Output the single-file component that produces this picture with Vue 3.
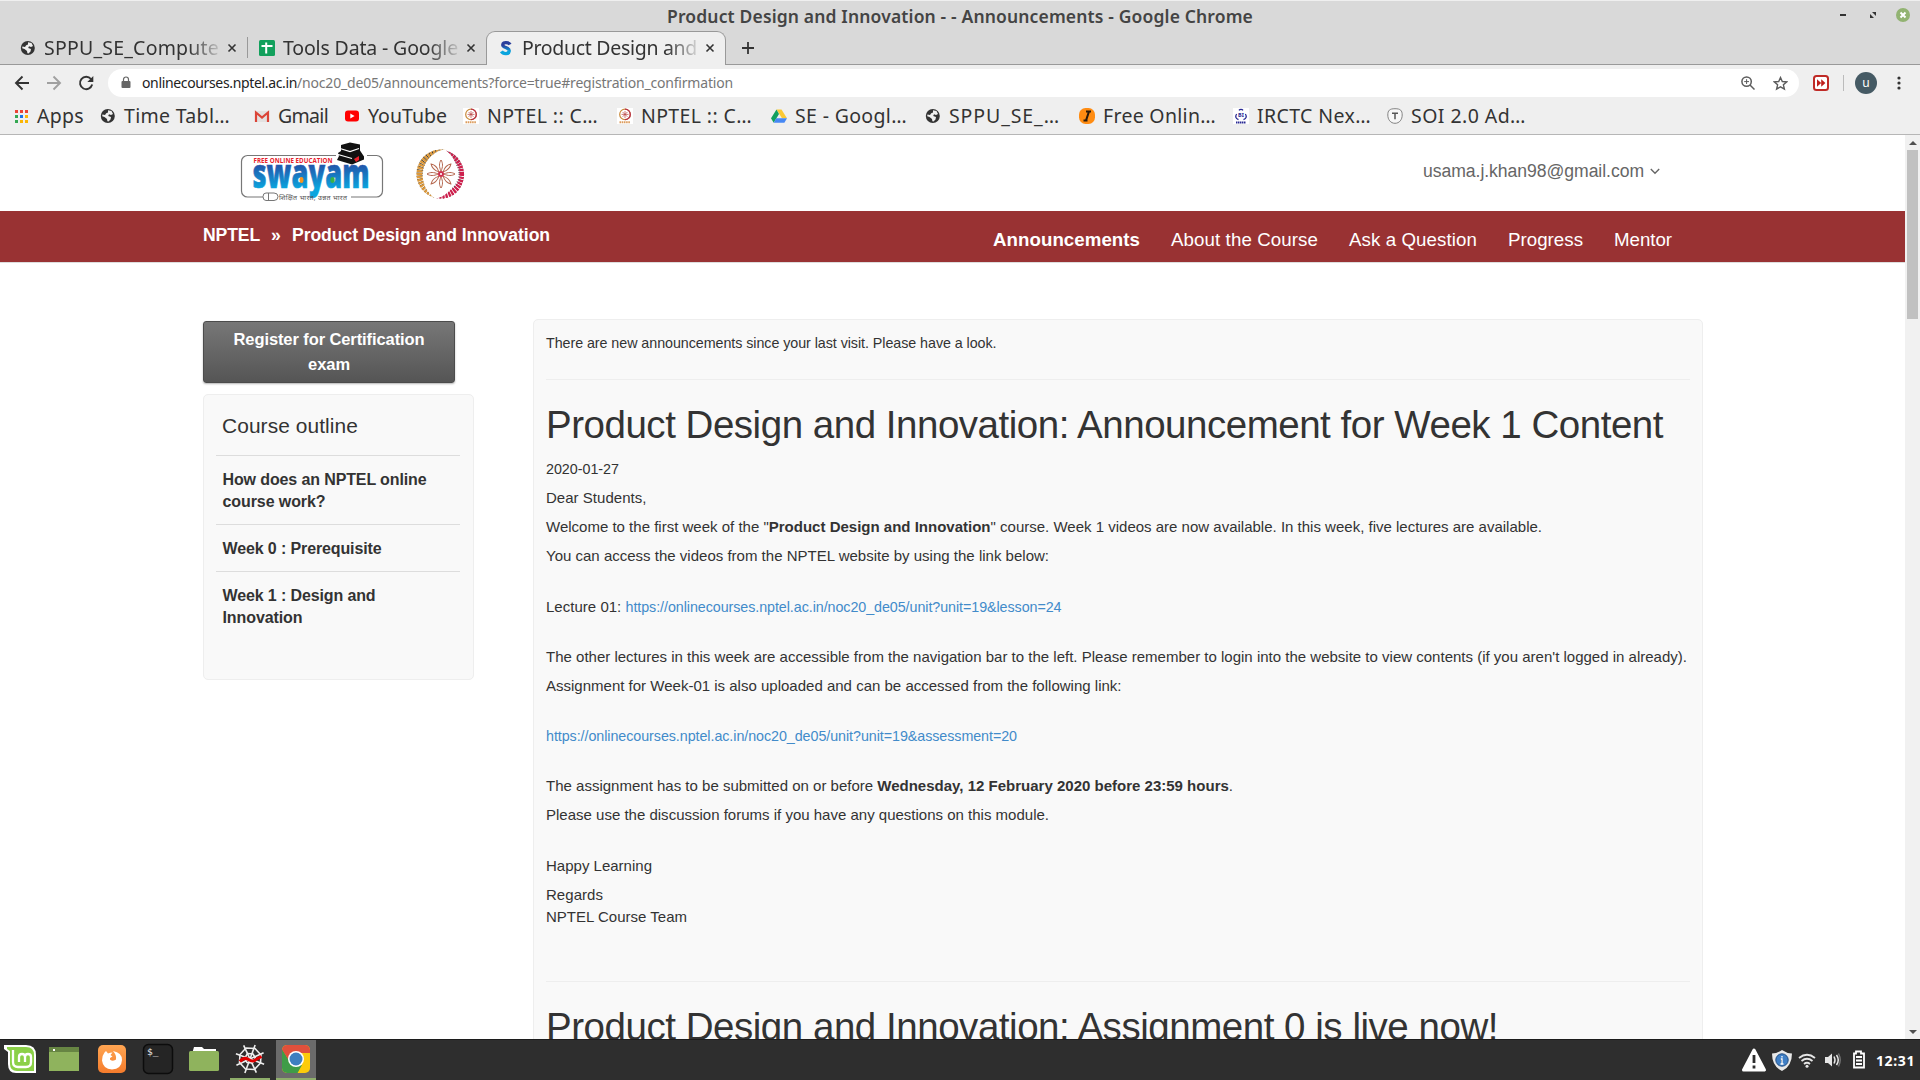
<script setup>
// Spreads a line's letters so that it takes the given width in pixels.
const vFit = {
  mounted(el, { value }) {
    const natural = el.getBoundingClientRect().width
    const count = el.textContent.length
    el.style.letterSpacing = `${(value - natural) / count}px`
  },
}

const tabs = [
  { icon: 'globe', text: 'SPPU_SE_Compute', w: 175 },
  { icon: 'sheet', text: 'Tools Data - Google', w: 175 },
  { icon: 'swayam', text: 'Product Design and', w: 175, active: true },
]

const bookmarks = [
  { icon: 'apps', text: 'Apps', w: 47 },
  { icon: 'globe', text: 'Time Tabl…', w: 106 },
  { icon: 'gmail', text: 'Gmail', w: 50 },
  { icon: 'youtube', text: 'YouTube', w: 79 },
  { icon: 'nptel', text: 'NPTEL :: C…', w: 111 },
  { icon: 'nptel', text: 'NPTEL :: C…', w: 111 },
  { icon: 'drive', text: 'SE - Googl…', w: 112 },
  { icon: 'globe', text: 'SPPU_SE_…', w: 111 },
  { icon: 'intern', text: 'Free Onlin…', w: 113 },
  { icon: 'irctc', text: 'IRCTC Nex…', w: 114 },
  { icon: 'soi', text: 'SOI 2.0 Ad…', w: 115 },
]

const nav = [
  { text: 'Announcements', w: 147, active: true },
  { text: 'About the Course', w: 147 },
  { text: 'Ask a Question', w: 128 },
  { text: 'Progress', w: 75 },
  { text: 'Mentor', w: 58 },
]

const outline = [
  [['How does an NPTEL online', 204], ['course work?', 103]],
  [['Week 0 : Prerequisite', 159]],
  [['Week 1 : Design and', 153], ['Innovation', 80]],
]

const rays = [0, 45, 90, 135, 180, 225, 270, 315]
const spokes = [0, 45, 90, 135]
</script>

<template>
  <div class="screen">
    <svg class="defs" width="0" height="0">
      <defs>
        <linearGradient id="blue" x1="0" y1="0" x2="0" y2="1">
          <stop offset="0.25" stop-color="#2a3f9b" /><stop offset="0.8" stop-color="#0aa5de" />
        </linearGradient>
        <linearGradient id="ffx" x1="0" y1="0" x2="0" y2="1">
          <stop offset="0" stop-color="#ffa552" /><stop offset="1" stop-color="#f57c2c" />
        </linearGradient>
        <symbol id="i-globe" viewBox="0 0 16 16">
          <circle cx="7.8" cy="8" r="7" fill="#333" />
          <path d="M8 2.2 11.5 3 13 6 11 7 9 6.2 8.2 8 11 9 10.5 11.5 8.5 13.5 7.4 13.3 7 11 4.5 9 2.2 8.2 2.4 6.4 5 7 6.2 5.2 8 4.4Z" fill="#efefef" />
        </symbol>
        <symbol id="i-sheet" viewBox="0 0 16 16">
          <rect width="16" height="16" rx="1.5" fill="#12a05c" /><path d="M2.500 6h11M7.200 2.500V13.500" stroke="#fff" stroke-width="2" />
        </symbol>
        <symbol id="i-swayam" viewBox="0 0 16 16">
          <path d="M12 4.6C11 2.6 5 1.4 4.8 4.8 4.6 8 11.5 7 11.2 11 10.8 14.8 5 14 3.4 11.4" fill="none" stroke="url(#blue)" stroke-width="3.4" />
        </symbol>
        <symbol id="i-apps" viewBox="0 0 16 16">
          <path d="M2 2h3v3H2zM7 2h3v3H7zM12 2h3v3h-3z" fill="#ea4335" />
          <path d="M2 7h3v3H2zM2 12h3v3H2z" fill="#34a853" /><path d="M7 7h3v3H7z" fill="#1a73e8" />
          <path d="M12 7h3v3h-3zM7 12h3v3H7zM12 12h3v3h-3z" fill="#fbb605" />
        </symbol>
        <symbol id="i-gmail" viewBox="0 0 16 16">
          <path d="M1 3h14v11H1z" fill="#e3e1e0" /><path d="M2 14V4.500l6 5 6-5V14" fill="none" stroke="#db4437" stroke-width="2.2" />
        </symbol>
        <symbol id="i-youtube" viewBox="0 0 16 16">
          <rect x="1" y="2.5" width="14" height="11" rx="3" fill="#f00" /><path d="M6.3 5.5v5L10.6 8z" fill="#fff" />
        </symbol>
        <symbol id="i-nptel" viewBox="0 0 16 16">
          <rect width="16" height="16" fill="#fff" />
          <circle cx="8" cy="6.4" r="5.3" fill="none" stroke="#c98b3c" stroke-width="1.2" />
          <path d="M8 1.1a5.3 5.3 0 0 1 0 10.6" fill="none" stroke="#b8304b" stroke-width="1.3" />
          <path d="M8 3v7M4.5 6.4h7M5.6 4l4.8 4.8M10.4 4 5.6 8.8" stroke="#b8433f" stroke-width=".7" />
          <path d="M2.5 14.3h11" stroke="#dc9c5d" stroke-width="2" stroke-dasharray="1.6 .6" />
        </symbol>
        <symbol id="i-drive" viewBox="0 0 16 16">
          <path d="M5.5 1.5h5L16 10.3h-5z" fill="#fcc934" /><path d="M5.5 1.5 8 6 2.7 14.7 0 10.3z" fill="#11a05e" /><path d="M5.2 10.3H16l-2.6 4.4H2.7z" fill="#4688f4" />
        </symbol>
        <symbol id="i-intern" viewBox="0 0 16 16">
          <rect width="16" height="16" rx="6.5" fill="#ff8c12" /><path d="M7 3.5h5M4.5 12.5h4M10 3.5 7 12.5" stroke="#2a1a0a" stroke-width="2.1" />
        </symbol>
        <symbol id="i-irctc" viewBox="0 0 16 16">
          <rect width="16" height="16" fill="#fff" />
          <path d="M6 2.400a2.200 1.600 0 0 1 4 0M3.600 6Q1.200 10 5.500 11.600M12.400 6q2.400 4-1.900 5.600" fill="none" stroke="#2a2a93" stroke-width="1.300" />
          <text x="8" y="9.300" font-size="5.500" font-weight="700" text-anchor="middle" fill="#2a2a93">BI</text>
          <path d="M3 14.500h10" stroke="#2a2a93" stroke-width="1.800" stroke-dasharray="1.500 .5" />
        </symbol>
        <symbol id="i-soi" viewBox="0 0 16 16">
          <path d="M8 .7c5.500 0 7.200 1.800 7.200 6.300S12.500 15.300 8 15.300.8 11.500.8 7 2.500.7 8 .7Z" fill="#f6f6f6" stroke="#777" stroke-width=".9" />
          <path d="M5 5.200h6M8 5.200v6" stroke="#555" stroke-width="1.500" />
        </symbol>
      </defs>
    </svg>

    <header class="frame">
      <div class="titlebar">
        <span v-fit="586" class="window-title">Product Design and Innovation - - Announcements - Google Chrome</span>
        <svg class="controls" width="80" height="20" viewBox="0 0 80 20">
          <path d="M0 10h6" stroke="#333" stroke-width="2" />
          <path d="M32 7h4v4zM30 9v4h4z" fill="#333" />
          <circle cx="63" cy="10" r="7" fill="#92b372" /><path d="m60.500 7.500 5 5m0-5-5 5" stroke="#fff" stroke-width="2" />
        </svg>
      </div>
      <div class="tabs">
        <div v-for="t in tabs" :key="t.text" class="tab" :class="[t.icon, { active: t.active }]">
          <svg width="16" height="16"><use :href="`#i-${t.icon}`" /></svg>
          <span class="tab-label"><span v-fit="t.w" class="fit">{{ t.text }}</span></span>
          <svg class="close" width="10" height="10" viewBox="0 0 10 10"><path d="m1.500 1.500 7 7m0-7-7 7" stroke="#333" stroke-width="1.600" /></svg>
        </div>
        <svg class="plus" width="14" height="14" viewBox="0 0 14 14"><path d="M7 1v12M1 7h12" stroke="#333" stroke-width="1.800" /></svg>
      </div>
    </header>

    <div class="toolbar">
      <svg class="arrows" width="84" height="20" viewBox="0 0 84 20" fill="none" stroke-width="1.900">
        <path d="M15 10H2m6.500-6.500L2 10l6.500 6.500" stroke="#333" /><path d="M33 10h13m-6.500-6.500L46 10l-6.500 6.500" stroke="#a0a0a0" />
        <path d="M77 6a6.200 6.200 0 1 0 1.200 5.600" stroke="#333" /><path d="M79.300 3v6h-6z" fill="#333" />
      </svg>
      <div class="omnibox">
        <svg class="lock" width="10" height="14" viewBox="0 0 10 14"><rect x=".5" y="5" width="9" height="7" rx="1" fill="#666" /><path d="M2.500 5V3.500a2.500 2.500 0 0 1 5 0V5" fill="none" stroke="#666" stroke-width="1.200" /></svg>
        <span class="url"><span v-fit="155" class="fit host">onlinecourses.nptel.ac.in</span><span v-fit="436" class="fit">/noc20_de05/announcements?force=true#registration_confirmation</span></span>
        <svg class="zoom" width="14" height="14" viewBox="0 0 14 14" fill="none" stroke="#5c5c5c" stroke-width="1.500"><circle cx="5.600" cy="5.600" r="4.700" /><path d="m9 9 4.500 4.500" /><path d="M3.200 5.600H8M5.600 3.200V8" stroke-width="1" /></svg>
        <svg class="star" width="15" height="15" viewBox="0 0 15 15"><path d="m7.500 1.500 1.800 4 4.400.4-3.300 2.900 1 4.300-3.900-2.300-3.900 2.300 1-4.300L1.300 5.900l4.400-.4z" fill="none" stroke="#5c5c5c" stroke-width="1.400" /></svg>
      </div>
      <svg class="ext" width="16" height="16" viewBox="0 0 16 16"><rect x="1" y="1" width="14" height="14" rx="2.500" fill="#fff" stroke="#bf2a26" stroke-width="2" /><path d="M4 4.200 8.200 8 4 11.800zM8.200 4.200 12.400 8l-4.200 3.800z" fill="#bf1f1c" /></svg>
      <i class="bar"></i>
      <span class="avatar">u</span>
      <svg class="dots" width="4" height="14" viewBox="0 0 4 14" fill="#333"><circle cx="2" cy="2" r="1.600" /><circle cx="2" cy="7" r="1.600" /><circle cx="2" cy="12" r="1.600" /></svg>
    </div>

    <div class="bookmarks">
      <div v-for="(b, i) in bookmarks" :key="i" class="bookmark">
        <svg width="16" height="16"><use :href="`#i-${b.icon}`" /></svg>
        <span v-fit="b.w" class="fit">{{ b.text }}</span>
      </div>
    </div>

    <div class="view">
      <div class="page">
        <div class="brand">
          <svg class="swayam-logo" width="146" height="64" viewBox="0 0 146 64">
            <path d="M97 17.500H8.500a6 6 0 0 0-6 6V53a6 6 0 0 0 6 6H24M112 59h25.500a6 6 0 0 0 6-6V23.500a6 6 0 0 0-6-6H128" fill="none" stroke="#777" stroke-width="1.200" />
            <text x="14.500" y="25.200" font-size="6.200" font-weight="700" textLength="79" fill="#e8202c" class="logo-text">FREE ONLINE EDUCATION</text>
            <text x="13.500" y="49.500" font-size="40" font-weight="800" textLength="117" lengthAdjust="spacingAndGlyphs" fill="url(#blue)" stroke="url(#blue)" stroke-width=".6" class="logo-text">swayam</text>
            <ellipse cx="62.500" cy="42" rx="2" ry="3" fill="#f7941d" /><ellipse cx="93.500" cy="42" rx="2.200" ry="3" fill="#35b24a" />
            <path d="m102 7 9-2.500 10 2v6l4 6v3l-12 5-15-4.500 2-4-1-3 3-2z" fill="#111" /><path d="m101 10.500 10 3 9-3M99 16.500l14 4" stroke="#fff" stroke-width="1.300" fill="none" /><path d="m115 21 5-3v4l-3 2z" fill="#e8202c" />
            <path d="M27 55h8q4 0 4 3.700T35 62.500h-8q-3 0-3-3.800t3-3.700ZM29.500 55v7.500" fill="#fff" stroke="#777" />
            <text x="40" y="61.500" font-size="7" textLength="68" fill="#555" class="logo-text">शिक्षित भारत, उन्नत भारत</text>
          </svg>
          <svg class="emblem" width="52" height="52" viewBox="0 0 52 52" fill="none">
            <clipPath id="left-horn"><path d="M31 1A25 25 0 1 0 21 51 27 27 0 0 1 31 1Z" /></clipPath>
            <clipPath id="right-horn"><path d="M31 2.500A25 25 0 0 1 19 51 27 27 0 0 0 31 2.500Z" /></clipPath>
            <g clip-path="url(#left-horn)"><circle cx="26" cy="26" r="21" stroke="#333" stroke-width="7" stroke-dasharray="1 2" /><circle cx="26" cy="26" r="21.500" stroke="#dd9a3c" stroke-width="6" stroke-dasharray="2.200 .8" /></g>
            <g clip-path="url(#right-horn)"><circle cx="26" cy="26" r="21" stroke="#444" stroke-width="7" stroke-dasharray="1 2" /><circle cx="26" cy="26" r="21.500" stroke="#cf1f4d" stroke-width="6" stroke-dasharray="2.200 .8" /></g>
            <g v-for="r in rays" :key="r" :transform="`rotate(${r} 26 26)`"><path d="M26 23c-2-4-2-8 0-11 2 3 2 7 0 11Z" stroke="#b5674e" stroke-width="1" /></g>
            <circle cx="26" cy="26" r="3" fill="#cf2f4d" /><circle cx="26" cy="26" r="1.100" fill="#fff" />
          </svg>
          <span class="user"><span v-fit="221" class="fit">usama.j.khan98@gmail.com</span>
            <svg width="10" height="7" viewBox="0 0 10 7"><path d="m.8 1 4.200 4.200L9.200 1" fill="none" stroke="#666" stroke-width="1.400" /></svg>
          </span>
        </div>
        <div class="ribbon">
          <div class="crumbs"><span v-fit="57" class="fit">NPTEL</span><span class="sep">»</span><span v-fit="258" class="fit">Product Design and Innovation</span></div>
          <nav><a v-for="n in nav" :key="n.text" v-fit="n.w" class="fit" :class="{ active: n.active }">{{ n.text }}</a></nav>
        </div>
        <div class="columns">
          <aside>
            <div class="register"><span v-fit="191" class="fit">Register for Certification</span><span v-fit="42" class="fit">exam</span></div>
            <div class="outline">
              <div class="heading"><span v-fit="136" class="fit">Course outline</span></div>
              <div v-for="(unit, i) in outline" :key="i" class="unit"><span v-for="l in unit" :key="l[0]" v-fit="l[1]" class="fit">{{ l[0] }}</span></div>
            </div>
          </aside>
          <main>
            <p class="small notice"><span v-fit="450.500" class="fit">There are new announcements since your last visit. Please have a look.</span></p>
            <hr>
            <h1><span v-fit="1117" class="fit">Product Design and Innovation: Announcement for Week 1 Content</span></h1>
            <p class="small"><span v-fit="73" class="fit">2020-01-27</span></p>
            <p><span v-fit="100.500" class="fit">Dear Students,</span></p>
            <p><span v-fit="996" class="fit">Welcome to the first week of the "<b>Product Design and Innovation</b>" course. Week 1 videos are now available. In this week, five lectures are available.</span></p>
            <p class="wide"><span v-fit="503" class="fit">You can access the videos from the NPTEL website by using the link below:</span></p>
            <p class="wide"><span v-fit="79.500" class="fit">Lecture 01: </span><a v-fit="436" class="fit small">https://onlinecourses.nptel.ac.in/noc20_de05/unit?unit=19&amp;lesson=24</a></p>
            <p><span v-fit="1141" class="fit">The other lectures in this week are accessible from the navigation bar to the left. Please remember to login into the website to view contents (if you aren't logged in already).</span></p>
            <p class="link-gap"><span v-fit="575.500" class="fit">Assignment for Week-01 is also uploaded and can be accessed from the following link:</span></p>
            <p class="wide"><a v-fit="471" class="fit small">https://onlinecourses.nptel.ac.in/noc20_de05/unit?unit=19&amp;assessment=20</a></p>
            <p><span v-fit="687" class="fit">The assignment has to be submitted on or before <b>Wednesday, 12 February 2020 before 23:59 hours</b>.</span></p>
            <p class="wide"><span v-fit="503" class="fit">Please use the discussion forums if you have any questions on this module.</span></p>
            <p><span v-fit="106" class="fit">Happy Learning</span></p>
            <p class="tight"><span v-fit="57" class="fit">Regards</span></p>
            <p class="last"><span v-fit="141" class="fit">NPTEL Course Team</span></p>
            <hr>
            <h1><span v-fit="952" class="fit">Product Design and Innovation: Assignment 0 is live now!</span></h1>
          </main>
        </div>
      </div>
      <div class="scrollbar"><i class="up"></i><i class="thumb"></i><i class="down"></i></div>
    </div>

    <footer class="taskbar">
      <div class="apps">
        <div class="app mint"><svg width="34" height="30" viewBox="0 0 34 30">
          <path d="M1 1h22q10 0 10 10v18H13Q5 29 5 20V8L1 5z" fill="#fff" /><path d="M4 3h19q8 0 8 8v16H14q-7 0-7-7V7L4 5z" fill="#8bd048" />
          <path d="M10 6v12q0 5 5 5h8q5 0 5-5v-5q0-3-3-3t-3 3v5m0-5q0-3-3-3t-3 3v5" fill="none" stroke="#fff" stroke-width="2.300" /></svg></div>
        <div class="app folder"><svg width="30" height="24"><rect width="30" height="24" fill="#8fb35d" /><rect width="30" height="5" fill="#678543" /><rect x="4" y="2" width="2" height="2" fill="#fff" /></svg></div>
        <div class="app"><svg width="30" height="30" viewBox="0 0 30 30"><rect x="1" y="1" width="28" height="28" rx="5" fill="url(#ffx)" />
          <path d="M7.500 8.500 9 7l2 2.500q2-1 4.500-1l-2 2.500 2 1.500-2.500 1.500q-.5 2 1.500 2.500 3 .5 4.500-1 1-4-3-8.500 9 1.500 9 9-.5 9-10 9.500-9-.5-10-9-.2-4.500 2.500-8Z" fill="#fff" /></svg></div>
        <div class="app"><svg width="32" height="32" viewBox="0 0 32 32"><rect x="1.500" y="1.500" width="29" height="29" rx="5" fill="#252525" stroke="#0c0c0c" stroke-width="1.500" /><text x="5" y="12" font-size="9.500" fill="#eee" class="mono">$_</text></svg></div>
        <div class="app"><svg width="30" height="26"><path d="M5 1h8l2 2h12v5H3z" fill="#fff" /><rect y="5" width="30" height="20" rx="1.500" fill="#8fb35d" /></svg></div>
        <div class="app running"><svg width="32" height="32" viewBox="0 0 32 32" fill="none" stroke="#eee" stroke-width="1.600">
          <path v-for="s in spokes" :key="s" :transform="`rotate(${s + 20} 16 16)`" d="M16 1v30" />
          <path d="m12 5 9 .5 6 6.500-.5 8-6 6.500-9-.5-6-6.500.5-8zM13.500 10.500l5.500.5 2.500 4-3 5-5.500-.5-2.500-4z" /><path d="M6 18.500q4-5 8.500-2t7.500 0l5.500-3" stroke="#e00000" stroke-width="3" /></svg></div>
        <div class="app running current"><svg width="30" height="30" viewBox="0 0 30 30"><clipPath id="cr"><rect x="1" y="1" width="28" height="28" rx="5" /></clipPath>
          <g clip-path="url(#cr)"><rect width="30" height="30" fill="#fccb0a" /><path d="M0 3 9 18l6 4 6-1-5 9H0z" fill="#3f9c47" /><path d="M0 0h30v9H15l-8 6L0 4z" fill="#e0503c" /></g>
          <circle cx="15" cy="15" r="8" fill="#fff" /><circle cx="15" cy="15" r="6.500" fill="#3e7fc0" /></svg></div>
      </div>
      <svg class="tray" width="124" height="26" viewBox="0 0 124 26">
        <path d="M12 3 22.500 23h-21z" fill="#fff" stroke="#fff" stroke-width="3" stroke-linejoin="round" /><path d="M12 8v8M12 18.500v3" stroke="#2e2e2e" stroke-width="2.800" />
        <path d="M40 3q5 3.500 10 3.500 0 13-10 17.500-10-4.500-10-17.500Q35 6.500 40 3Z" fill="#e8e8e8" /><circle cx="40" cy="13" r="6.200" fill="#3f7fc6" stroke="#234f85" /><path d="M40 9v1.500M38.800 12H40v5m-1.500 0h3" stroke="#fff" stroke-width="1.300" />
        <g fill="none" stroke="#e6e6e6" stroke-width="1.800"><path d="M57 11q8-6.500 16 0M59.500 14q5.500-4.500 11 0M62 17q3-2.500 6 0" /></g><circle cx="65" cy="19.300" r="1.500" fill="#e6e6e6" />
        <path d="M83 10h3l4-3.500v13L86 16h-3z" fill="#e6e6e6" /><path d="M92 9.500q2 3.500 0 7M94.500 8q3.500 5 0 10" fill="none" stroke="#e6e6e6" stroke-width="1.500" /><path d="M96.500 6.500q3.500 6.500 0 13" fill="none" stroke="#777" stroke-width="1.300" />
        <path d="M112 6.500h2v-2h5v2h3v14h-10z" fill="none" stroke="#fff" stroke-width="1.800" /><path d="M114 10h6M114 13.500h6M114 17h6" stroke="#fff" stroke-width="1.800" />
      </svg>
      <span v-fit="39" class="fit clock">12:31</span>
    </footer>
  </div>
</template>

<style>
html, body { margin: 0; overflow: hidden; }
</style>

<style scoped>
* { box-sizing: border-box; }
svg { display: block; flex: none; }
.defs { position: absolute; }
.fit { display: inline-block; white-space: pre; flex: none; }
.screen { width: 1920px; height: 1080px; display: flex; flex-direction: column; overflow: hidden; background: #fff; color: #333; font-family: "Liberation Sans", Arial, sans-serif; }
.frame { height: 65px; flex: none; background: #d9d9d9; border-top: 1px solid #efefef; border-bottom: 1px solid #999; font-family: "Noto Sans", sans-serif; }
.titlebar { height: 30px; display: flex; align-items: center; }
.window-title { display: inline-block; white-space: nowrap; margin-left: 667px; font-size: 17.500px; font-weight: 600; color: #444; line-height: 30px; }
.controls { margin-left: 587px; margin-top: -2px; }
.tabs { height: 34px; display: flex; align-items: flex-start; }
.tab { height: 33px; display: flex; align-items: center; font-size: 19.500px; }
.tab.globe { width: 248px; padding-left: 20px; }
.tab.globe::after { content: ""; width: 1px; height: 21px; background: #999; margin-left: 10px; }
.tab.sheet { width: 238px; padding-left: 11px; }
.tab.active { width: 240px; height: 34px; padding: 0 0 1px 11px; background: #efefef; border: 1px solid #999; border-bottom: 0; border-radius: 9px 9px 0 0; }
.tab-label { width: 175px; height: 32px; line-height: 32px; margin-left: 8px; white-space: nowrap; -webkit-mask-image: linear-gradient(90deg, #000 145px, transparent 180px); }
.close { margin-left: 8px; }
.plus { margin: 10px 0 0 15px; }
.toolbar { height: 37px; flex: none; display: flex; align-items: center; background: #efefef; font-family: "Noto Sans", sans-serif; padding-bottom: 1px; }
.arrows { margin-left: 14px; }
.omnibox { width: 1691px; height: 28px; margin-left: 10px; border-radius: 14px; background: #fff; display: flex; align-items: center; padding-left: 13px; }
.url { flex: 1; margin-left: 11px; font-size: 14px; color: #777; line-height: 28px; white-space: nowrap; }
.host { color: #222; }
.zoom { margin-right: 1px; }
.star { margin: 0 11px 0 17px; }
.ext { margin-left: 14px; }
.bar { width: 1px; height: 16px; margin-left: 14px; background: #bbb; }
.avatar { width: 22px; height: 22px; margin-left: 11px; border-radius: 50%; background: #455a64; color: #fff; font-size: 12px; line-height: 21px; text-align: center; }
.dots { margin-left: 20px; }
.bookmarks { height: 33px; flex: none; display: grid; grid-template-columns: 87px 154px 90px 119px repeat(7, 154px); padding-left: 13px; background: #efefef; border-bottom: 1px solid #b6b6b6; font: 19.500px/28px "Noto Sans", sans-serif; }
.bookmark { height: 28px; display: flex; align-items: center; gap: 8px; }
.view { height: 904px; flex: none; display: flex; overflow: hidden; }
.page { width: 1905px; height: 904px; overflow: hidden; }
.brand { height: 76px; display: flex; }
.swayam-logo { margin: 3px 0 0 239px; }
.emblem { margin: 13px 0 0 30px; }
.user { display: flex; align-items: center; height: 22px; gap: 6px; margin: 25px 0 0 956px; font-size: 17.600px; color: #666; }
.ribbon { height: 52px; display: flex; justify-content: space-between; background: #993233; border-bottom: 1px solid #ddd; color: #fff; }
.crumbs { display: flex; margin-left: 203px; font: bold 17.600px/49px "Liberation Sans", Arial, sans-serif; }
.sep { width: 32px; padding-left: 11px; }
nav { display: flex; gap: 31px; margin-right: 233px; font-size: 18.700px; line-height: 57px; }
nav .active { font-weight: bold; }
.columns { display: flex; align-items: flex-start; padding: 56px 0 0 203px; gap: 59px; }
aside { width: 271px; padding-top: 2px; }
.register { width: 252px; height: 62px; padding: 5px 0; display: flex; flex-direction: column; align-items: center; border: 1px solid #4c4c4c; border-radius: 3px; background: linear-gradient(#777, #555); box-shadow: 0 1px 2px rgba(0, 0, 0, .3); color: #fff; font-weight: bold; font-size: 16.500px; line-height: 25px; }
.outline { height: 286px; margin-top: 11px; padding: 0 13px 0 12px; background: #f9f9f9; border: 1px solid #eee; border-radius: 5px; }
.heading { height: 60px; padding: 17px 0 0 6px; font-size: 20.900px; line-height: 28px; }
.unit { display: flex; flex-direction: column; align-items: flex-start; border-top: 1px solid #ddd; padding: 13px 0 11px 6.500px; font-size: 16px; font-weight: bold; line-height: 22px; }
main { width: 1170px; height: 800px; padding: 12px; background: #f9f9f9; border: 1px solid #eee; border-radius: 5px 5px 0 0; }
p { margin: 0 0 7px; height: 22px; font-size: 15px; line-height: 22px; white-space: nowrap; }
.small { font-size: 14.300px; }
p.notice { margin: 0 0 25px; }
p.wide { margin-bottom: 28.500px; }
p.link-gap { margin-bottom: 27.500px; }
p.tight { margin-bottom: 0; }
p.last { margin-bottom: 53px; }
hr { margin: 0; border: 0; border-top: 1px solid #eee; }
h1 { height: 42px; margin: 24px 0 12px; font-size: 38.500px; font-weight: normal; line-height: 42px; white-space: nowrap; }
a { color: #428bca; }
nav a { color: #fff; }
.scrollbar { width: 15px; background: #f1f1f1; display: flex; flex-direction: column; align-items: center; }
.up { margin-top: 6px; border: 4px solid transparent; border-top: 0; border-bottom-color: #505050; }
.thumb { width: 11px; height: 169px; margin-top: 5px; background: #c1c1c1; }
.down { margin: auto 0 5px; border: 4px solid transparent; border-bottom: 0; border-top-color: #505050; }
.taskbar { height: 41px; flex: none; display: flex; align-items: center; background: #2e2e2e; border-top: 1px solid #1c1c1c; }
.apps { display: flex; gap: 6px; }
.app { width: 40px; height: 40px; display: flex; align-items: center; justify-content: center; padding-bottom: 2px; }
.app.mint { margin-right: -2px; }
.app.folder { margin-right: 2px; }
.running { border-bottom: 2px solid #8fae6b; padding-bottom: 0; }
.current { background: #6b6b6b; }
.tray { margin-left: auto; }
.clock { margin: 0 5px 0 10px; padding-top: 2px; color: #fff; font: bold 14px/20px "Noto Sans", sans-serif; }
.logo-text { font-family: "Open Sans", "Noto Sans", sans-serif; }
.mono { font-family: "DejaVu Sans Mono", monospace; }
</style>
